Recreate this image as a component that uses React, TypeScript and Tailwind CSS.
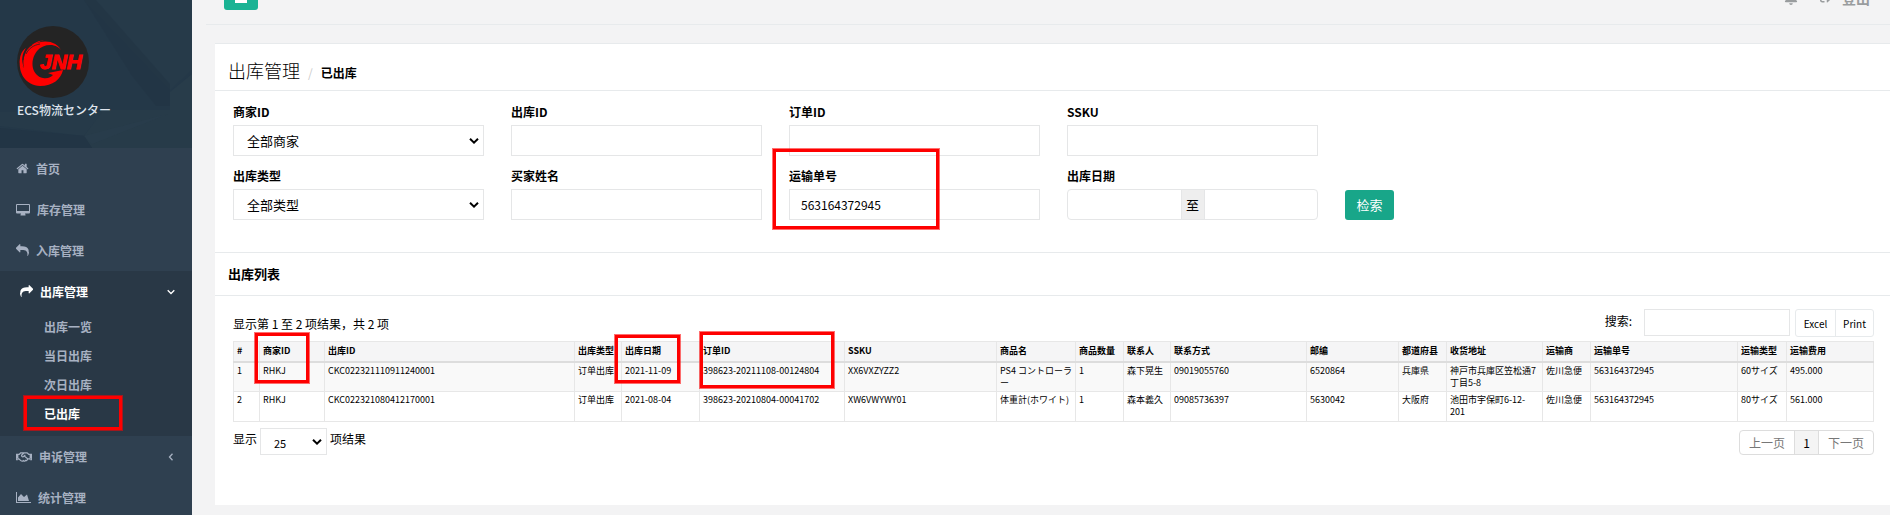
import type { ReactNode } from "react";
import { FaBell, FaRegHandshake, FaSignOutAlt } from "react-icons/fa";

function HomeIcon() {
  return (
    <svg viewBox="0 0 1792 1792" className="size-[13px] fill-current" aria-hidden="true">
      <path d="M1472 992v480q0 26-19 45t-45 19h-384v-384h-256v384h-384q-26 0-45-19t-19-45v-480q0-1 .5-3t.5-3l575-474 575 474q1 2 1 6zm223-69l-62 74q-8 9-21 11h-3q-13 0-21-7l-692-577-692 577q-12 8-24 7-13-2-21-11l-62-74q-8-10-7-23.5t11-21.5l719-599q32-26 76-26t76 26l244 204v-195q0-14 9-23t23-9h192q14 0 23 9t9 23v408l219 182q10 8 11 21.5t-7 23.5z" />
    </svg>
  );
}

function DesktopIcon() {
  return (
    <svg viewBox="0 0 14 13" className="h-[13px] w-[14px] fill-current" aria-hidden="true">
      <path fillRule="evenodd" d="M1 1h12a1 1 0 0 1 1 1v7.500a1 1 0 0 1-1 1H9l.5 1.200v.8h-5v-.8l.5-1.200H1a1 1 0 0 1-1-1V2a1 1 0 0 1 1-1zm0 1v6h12V2z" />
    </svg>
  );
}

function ReplyIcon({ flip = false }: { flip?: boolean }) {
  return (
    <svg viewBox="0 0 1792 1792" className={flip ? "size-[13px] -scale-x-100 fill-current" : "size-[13px] fill-current"} aria-hidden="true">
      <path d="M1792 1120q0 166-127 451-3 7-10.5 24t-13.5 30-13 22q-12 17-28 17-15 0-23.5-10t-8.500-25q0-9 2.500-26.500t2.500-23.500q5-68 5-123 0-112-19.500-200.500t-54-153.500-89-112-117.500-80-142-44.500-159.500-21.500-172.500-6h-224v256q0 26-19 45t-45 19-45-19l-512-512q-19-19-19-45t19-45l512-512q19-19 45-19t45 19 19 45v256h224q713 0 875 403 53 134 53 333z" />
    </svg>
  );
}

function ChartIcon() {
  return (
    <svg viewBox="0 0 15 13" className="h-[13px] w-[15px] fill-current" aria-hidden="true">
      <path d="M0 1h1v10h14v1H0zM2 10V6.500L5 3l3 3 3-2.500 2 6.500z" />
    </svg>
  );
}

function Caret({ open = false }: { open?: boolean }) {
  return (
    <svg viewBox="0 0 8 8" className="ml-auto size-2 fill-none stroke-current" strokeWidth="1.300" aria-hidden="true">
      <path d={open ? "M.7 2.300 4 5.500l3.300-3.200" : "M5.500.8 2.500 4l3 3.200"} />
    </svg>
  );
}

function Logo() {
  return (
    <svg viewBox="0 0 72 72" className="size-[72px]" role="img" aria-label="JNH">
      <circle cx="36" cy="36" r="36" fill="#242424" />
      <g fill="#fe0000">
        <path d="M45 26C41 17 27 17 20 25c-8 10-5 25 6 27 5 1 8-1 10-3l-5-2 15-3c-2 9-10 16-23 16C9 59 1 48 3 33c1 4 2 7 4 9C5 33 8 23 15 19c11-6 25-5 30 7z" />
        <path d="M7 42C4 34 5 28 9 22 4 25 2 32 3 38zM8 30c2-8 9-14 16-15-7 3-12 7-14 14zM14 20c4-4 9-6 13-5-5 0-9 2-11 5z" />
        <text x="23" y="43" fontFamily="Liberation Sans, sans-serif" fontSize="21" fontWeight="700" fontStyle="italic" stroke="#fe0000" strokeWidth="1">
          JNH
        </text>
      </g>
      <path d="M6 34c1-7 4-12 9-15M9 28c3-6 8-9 14-10" fill="none" stroke="#242424" strokeWidth=".8" />
    </svg>
  );
}

function HeaderPattern() {
  return (
    <svg viewBox="0 0 192 148" preserveAspectRatio="none" className="absolute inset-0 size-full" aria-hidden="true">
      <path fill="#243848" d="M0 0h192v148H0z" />
      <path fill="#263a49" d="M84 0h108v70l-22 20z" />
      <path fill="#223545" d="M84 0h12l74 84v22h-14l-24-30z" opacity=".7" />
      <path fill="#283c4a" d="M170 92l22-18v36h-22z" />
      <path fill="#273b49" d="M84 136l18-26h90v38H92z" />
      <path fill="#263a49" d="M0 112h102l-18 24-84-10z" />
      <path fill="#223545" d="M0 128l84 8 8 12H0z" />
      <path fill="#2a3e4c" d="M84 136l84-22-76 30z" opacity=".6" />
    </svg>
  );
}

function NavItem({ icon, label, caret }: { icon: ReactNode; label: string; caret?: ReactNode }) {
  return (
    <a href="#" className="flex h-[41px] items-center gap-[7px] pr-[17px] pl-4">
      {icon}
      <span>{label}</span>
      {caret}
    </a>
  );
}

function Mark({ className }: { className: string }) {
  return <span className={`pointer-events-none absolute z-10 border-[3px] border-[#fe0000] outline outline-[#ff000090] ${className}`} />;
}

function Sidebar() {
  const sub = ["出库一览", "当日出库", "次日出库", "已出库"];
  return (
    <aside className="w-48 shrink-0 bg-[#2f4050] text-xs font-bold text-[#a7b1c2]">
      <div className="relative h-[148px]">
        <HeaderPattern />
        <div className="relative px-[17px] pt-[26px] text-[#dfe4ed]">
          <Logo />
          <p className="pt-1 leading-4 font-medium">ECS物流センター</p>
        </div>
      </div>
      <nav>
        <NavItem icon={<HomeIcon />} label="首页" />
        <NavItem icon={<DesktopIcon />} label="库存管理" />
        <NavItem icon={<ReplyIcon />} label="入库管理" />
        <div className="bg-[#293846] pb-2">
          <div className="pl-1 text-white">
            <NavItem icon={<ReplyIcon flip />} label="出库管理" caret={<Caret open />} />
          </div>
          <ul>
            {sub.map((s) => (
              <li key={s} className="relative">
                <a href="#" className={s === "已出库" ? "block h-[29px] pl-11 leading-[29px] text-white" : "block h-[29px] pl-11 leading-[29px]"}>
                  {s}
                </a>
                {s === "已出库" && <Mark className="-top-[3px] left-6 h-[34px] w-[98px]" />}
              </li>
            ))}
          </ul>
        </div>
        <NavItem icon={<FaRegHandshake className="size-4" />} label="申诉管理" caret={<Caret />} />
        <NavItem icon={<ChartIcon />} label="统计管理" />
      </nav>
    </aside>
  );
}

function Arrow() {
  return (
    <svg viewBox="0 0 10 8" className="pointer-events-none absolute top-1/2 right-[5px] h-2 w-[10px] -translate-y-1/2 fill-none stroke-black" strokeWidth="2" aria-hidden="true">
      <path d="M1 1.800 5 5.600l4-3.800" />
    </svg>
  );
}

const box = "h-[31px] w-full border border-[#e5e6e7] bg-white px-[11px] text-xs";

function Field({ id, label, children }: { id: string; label: string; children: ReactNode }) {
  return (
    <div className="relative">
      <label htmlFor={id} className="block h-[21px] text-xs leading-4 font-bold">
        {label}
      </label>
      {children}
    </div>
  );
}

function SelectField({ id, label, option }: { id: string; label: string; option: string }) {
  return (
    <Field id={id} label={label}>
      <div className="relative">
        <select id={id} className="block h-[31px] w-full appearance-none border border-[#e5e6e7] bg-white px-[13px] text-[13px]">
          <option>{option}</option>
        </select>
        <Arrow />
      </div>
    </Field>
  );
}

function Filters() {
  return (
    <form className="grid grid-cols-6 gap-x-[27px] gap-y-3 border-b border-[#e7eaec] pt-[13px] pr-4 pb-8 pl-[18px]">
      <SelectField id="merchant" label="商家ID" option="全部商家" />
      <Field id="outbound" label="出库ID">
        <input id="outbound" className={box} />
      </Field>
      <Field id="order" label="订单ID">
        <input id="order" className={box} />
      </Field>
      <Field id="ssku" label="SSKU">
        <input id="ssku" className={box} />
      </Field>
      <div className="col-start-1">
        <SelectField id="type" label="出库类型" option="全部类型" />
      </div>
      <Field id="buyer" label="买家姓名">
        <input id="buyer" className={box} />
      </Field>
      <Field id="tracking" label="运输单号">
        <input id="tracking" className={box} defaultValue="563164372945" />
        <Mark className="-top-[19px] -left-4 h-[80px] w-[166px]" />
      </Field>
      <Field id="from" label="出库日期">
        <div className="flex h-[31px] overflow-hidden rounded-sm border border-[#e5e6e7] text-[13px]">
          <input id="from" className="min-w-0 flex-1 px-2" />
          <span className="flex w-6 items-center justify-center border-x border-[#e5e6e7] bg-[#eeeeee]">至</span>
          <input aria-label="出库日期至" className="min-w-0 flex-1 px-2" />
        </div>
      </Field>
      <div className="flex items-end">
        <button type="button" className="h-[30px] w-[49px] rounded-[3px] bg-[#18a689] text-[13px] text-white">
          检索
        </button>
      </div>
    </form>
  );
}

const columns = [
  { name: "#", w: "w-[26px]" },
  { name: "商家ID", w: "w-[65px]" },
  { name: "出库ID", w: "w-[250px]" },
  { name: "出库类型", w: "w-[47px]" },
  { name: "出库日期", w: "w-[78px]" },
  { name: "订单ID", w: "w-[145px]" },
  { name: "SSKU", w: "w-[152px]" },
  { name: "商品名", w: "w-[79px]" },
  { name: "商品数量", w: "w-[48px]" },
  { name: "联系人", w: "w-[47px]" },
  { name: "联系方式", w: "w-[136px]" },
  { name: "邮编", w: "w-[92px]" },
  { name: "都道府县", w: "w-[48px]" },
  { name: "收货地址", w: "w-[96px]" },
  { name: "运输商", w: "w-[48px]" },
  { name: "运输单号", w: "w-[147px]" },
  { name: "运输类型", w: "w-[49px]" },
  { name: "运输费用", w: "w-[87px]" },
];

const marks: Record<string, string> = {
  商家ID: "-top-[9px] -left-[5px] h-[50px] w-[54px]",
  出库日期: "-top-[7px] -left-[7px] h-[48px] w-[65px]",
  订单ID: "-top-[10px] left-0 h-[56px] w-[134px]",
};

const rows = [
  ["1", "RHKJ", "CKC022321110911240001", "订单出库", "2021-11-09", "398623-20211108-00124804", "XX6VXZYZZ2", "PS4 コントローラー", "1", "森下晃生", "09019055760", "6520864", "兵庫県", "神戸市兵庫区笠松通7丁目5-8", "佐川急便", "563164372945", "60サイズ", "495.000"],
  ["2", "RHKJ", "CKC022321080412170001", "订单出库", "2021-08-04", "398623-20210804-00041702", "XW6VWYWY01", "体重計(ホワイト)", "1", "森本義久", "09085736397", "5630042", "大阪府", "池田市宇保町6-12-201", "佐川急便", "563164372945", "80サイズ", "561.000"],
];

function ResultTable() {
  return (
    <table className="w-full table-fixed border-collapse text-[9px] leading-3">
      <thead>
        <tr className="h-5 bg-[#f5f5f6]">
          {columns.map((c) => (
            <th key={c.name} className={`relative border border-b-2 border-[#e7e7e7] border-b-[#dddddd] px-[3px] py-0 text-left font-bold whitespace-nowrap ${c.w}`}>
              {c.name}
              {marks[c.name] && <Mark className={marks[c.name]} />}
            </th>
          ))}
        </tr>
      </thead>
      <tbody>
        {rows.map((r) => (
          <tr key={r[0]} className="h-[30px] odd:bg-[#f9f9f9]">
            {r.map((v, i) => (
              <td key={i} className="border border-[#e7e7e7] px-[3px] pt-[2px] pb-0 align-top">
                {v}
              </td>
            ))}
          </tr>
        ))}
      </tbody>
    </table>
  );
}

export default function App() {
  return (
    <div className="flex h-screen overflow-hidden bg-[#f3f3f4] font-['Noto_Sans_CJK_SC','Noto_Sans_CJK_JP',sans-serif] text-black">
      <Sidebar />
      <main className="min-w-0 flex-1">
        <header className="-mt-9 ml-[14px] flex h-[61px] items-start border-b border-[#e7eaec] pt-4 pr-5 pl-[18px] text-[#999c9e]">
          <button type="button" aria-label="菜单" className="flex h-[30px] w-[34px] items-center justify-center rounded-[3px] bg-[#1ab394]">
            <svg viewBox="0 0 12 16" className="h-4 w-3 fill-white" aria-hidden="true">
              <path d="M0 1h12v2H0zM0 7h12v2H0zM0 12h12v4H0z" />
            </svg>
          </button>
          <div className="ml-auto flex h-9 items-center gap-[22px]">
            <button type="button" aria-label="通知">
              <FaBell className="size-[14px]" />
            </button>
            <a href="#" className="flex items-center gap-[10px] text-[14px] leading-5 font-bold">
              <FaSignOutAlt className="size-3" />
              登出
            </a>
          </div>
        </header>
        <section className="mt-[18px] ml-[23px] border-t border-[#e7eaec] bg-white pb-[50px]">
          <div className="flex h-[47px] items-baseline border-b border-[#e7eaec] pt-3 pl-[13px]">
            <h1 className="text-[18px] leading-7 font-light">出库管理</h1>
            <span className="px-2 text-xs text-[#cccccc]">/</span>
            <strong className="text-xs">已出库</strong>
          </div>
          <Filters />
          <h2 className="flex h-[43px] items-center border-b border-[#e7eaec] pl-[13px] text-[13px] font-bold">出库列表</h2>
          <div className="pt-[13px] pr-4 pl-[18px] text-xs">
            <div className="flex h-8 items-start justify-between">
              <p className="pt-[7px] leading-4">显示第 1 至 2 项结果，共 2 项</p>
              <div className="flex">
                <label htmlFor="search" className="pt-1 pr-3 leading-4">
                  搜索:
                </label>
                <input id="search" className="h-[27px] w-[146px] border border-[#e5e6e7] px-2" />
                <div className="ml-[5px] flex h-7 overflow-hidden rounded-[3px] border border-[#e7eaec] text-[10px]">
                  <button type="button" className="w-[39px] pt-[2px]">Excel</button>
                  <button type="button" className="w-[38px] border-l border-[#e7eaec] pt-[2px]">Print</button>
                </div>
              </div>
            </div>
            <ResultTable />
            <div className="flex items-start justify-between pt-[6px]">
              <div className="flex gap-[3px] leading-[22px]">
                <label htmlFor="size">显示</label>
                <div className="relative">
                  <select id="size" aria-label="每页条数" className="block h-[27px] w-[67px] appearance-none border border-[#e5e6e7] bg-white px-[13px] pt-[2px] text-[11px]">
                    <option>25</option>
                  </select>
                  <Arrow />
                </div>
                <span>项结果</span>
              </div>
              <div className="mt-[2px] flex h-[25px] overflow-hidden rounded-[4px] border border-[#dddddd] text-[#777777]">
                <button type="button" className="w-[54px]">上一页</button>
                <button type="button" className="w-[25px] border-x border-[#dddddd] bg-[#f4f4f4] text-black">1</button>
                <button type="button" className="w-[54px]">下一页</button>
              </div>
            </div>
          </div>
        </section>
      </main>
    </div>
  );
}
